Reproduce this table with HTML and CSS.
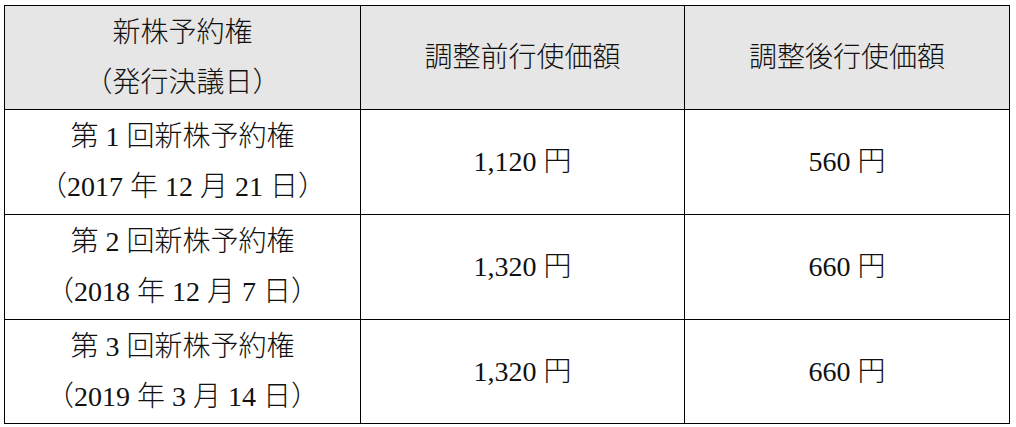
FILE: index.html
```html
<!DOCTYPE html>
<html lang="ja">
<head>
<meta charset="utf-8">
<link rel="stylesheet" href="styles.css">
</head>
<body>
<table class="grid">
  <colgroup>
    <col class="c1">
    <col class="c2">
    <col class="c3">
  </colgroup>
  <thead>
    <tr class="r-head">
      <th>新株予約権<br>（発行決議日）</th>
      <th>調整前行使価額</th>
      <th>調整後行使価額</th>
    </tr>
  </thead>
  <tbody>
    <tr class="r-a">
      <td>第 1 回新株予約権<br>（2017 年 12 月 21 日）</td>
      <td>1,120 円</td>
      <td>560 円</td>
    </tr>
    <tr class="r-b">
      <td>第 2 回新株予約権<br>（2018 年 12 月 7 日）</td>
      <td>1,320 円</td>
      <td>660 円</td>
    </tr>
    <tr class="r-c">
      <td>第 3 回新株予約権<br>（2019 年 3 月 14 日）</td>
      <td>1,320 円</td>
      <td>660 円</td>
    </tr>
  </tbody>
</table>
</body>
</html>
```

FILE: styles.css
```css
html, body {
  margin: 0;
  padding: 0;
  background: #ffffff;
}
body {
  padding: 5px 0 0 4px;
  font-family: "Liberation Serif", "Noto Sans CJK JP", serif;
  font-size: 28px;
  font-weight: 300;
  color: #111;
}
.grid {
  border-collapse: collapse;
  table-layout: fixed;
  width: 1005px;
}
.c1 { width: 356px; }
.c2 { width: 324px; }
.c3 { width: 325px; }
.grid th,
.grid td {
  border: 1px solid #000;
  padding: 0;
  text-align: center;
  vertical-align: middle;
  line-height: 50px;
  font-weight: 300;
}
.grid thead th {
  background: #e7e6e6;
}
.r-head { height: 104px; }
.r-a { height: 105px; }
.r-b { height: 105px; }
.r-c { height: 104px; }
```
